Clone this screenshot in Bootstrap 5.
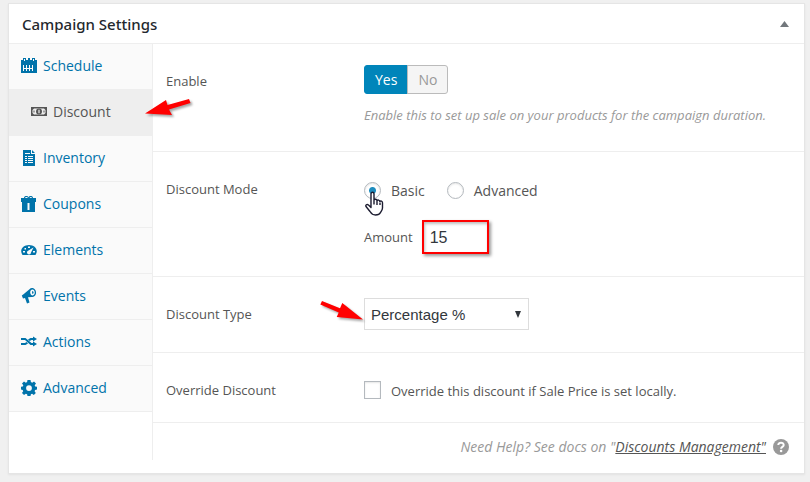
<!DOCTYPE html>
<html lang="en">
<head>
<meta charset="utf-8">
<meta name="viewport" content="width=device-width, initial-scale=1">
<title>Campaign Settings</title>
<link href="https://cdn.jsdelivr.net/npm/bootstrap@5.3.0/dist/css/bootstrap.min.css" rel="stylesheet">
<style>
body { background: #f0f0f0; color: #555; font: 13px/20px "Open Sans", "Noto Sans", sans-serif; padding: 3px 5px 8px 8px; }
.panel { background: #fff; border: 1px solid #e5e5e5; box-shadow: 0 1px 2px rgba(0,0,0,.06); padding-bottom: 13px; }
.panel-head { height: 40px; border-bottom: 1px solid #eee; padding: 0 15px 0 13px; }
.panel-head h2 { font-family: "Noto Sans", "Open Sans", sans-serif; font-size: 15px; line-height: 20px; font-weight: 500; color: #23282d; }
.toggle { border: 0; background: none; padding: 0; line-height: 0; }
.side { width: 144px; border-right: 1px solid #eee; }
.side a { height: 46px; padding: 0 0 2px 12px; gap: 6px; font-size: 14px; color: #0073aa; background: #fafafa; border-bottom: 1px solid #eee; text-decoration: none; }
.side a.current { background: #eee; color: #555; padding-left: 22px; }
.side a svg { width: 16px; height: 16px; fill: currentColor; flex: none; }
.setting { border-bottom: 1px solid #eee; padding: 21px 14px 0 13px; }
.setting-name { width: 198px; flex: none; padding-top: 6px; }
.r-enable { min-height: 108px; }
.r-mode { min-height: 125px; }
.r-type { min-height: 76px; }
.r-over { min-height: 70px; }
.yesno .btn { font: inherit; font-size: 14px; line-height: 20px; height: 29px; padding: 3px 10px; border-radius: 3px; }
.yesno .yes { background: #0085ba; border-color: #0085ba; color: #fff; }
.yesno .no { background: #f5f5f5; border-color: #bbb; color: #999; }
.hint { color: #999; font-style: italic; margin-top: 11px; }
.form-check-input.tick { width: 17px; height: 17px; margin: 0; border: 1px solid #b4b9be; box-shadow: inset 0 1px 2px rgba(0,0,0,.1); background-color: #fff; background-size: 100% 100%; }
.form-check-input.tick[type=checkbox] { border-radius: 0; height: 18px; }
.form-check-input.tick:checked { background-color: #fff; background-image: radial-gradient(circle, #1e8cbe 3px, transparent 4px); }
.choice { gap: 10px; }
.modes { padding-top: 6px; gap: 22px; }
.modes label { font-size: 14px; padding-top: 2px; }
.amount-row { margin-top: 19px; gap: 9px; }
.override-row { padding-top: 7px; }
.amount { width: 67px; height: 34px; border: 2px solid #f00; border-radius: 0; padding: 2px 6px 0; font: 16px "Liberation Sans", Arial, sans-serif; color: #32373c; box-shadow: 2px 2px 3px rgba(0,0,0,.4), inset 1px 2px 3px rgba(0,0,0,.25); }
.kind { width: 165px; height: 32px; border: 1px solid #ddd; border-radius: 0; padding: 0 24px 0 6px; font: 15px "Liberation Sans", Arial, sans-serif; color: #32373c; background-image: url("data:image/svg+xml,%3Csvg xmlns='http://www.w3.org/2000/svg' viewBox='0 0 6 7'%3E%3Cpath fill='%2332373c' d='M0 0h6L3 7z'/%3E%3C/svg%3E"); background-size: 6px 7px; background-position: right 7px center; }
.foot { height: 37px; padding: 10px 15px 0 0; gap: 7px; font-size: 14px; font-style: italic; color: #999; }
.foot a { color: #555; }
.mark-arrow, .pointer { position: absolute; pointer-events: none; }
.mark-arrow { filter: drop-shadow(2px 2px 1px rgba(0,0,0,.35)); fill: #f00; }
.at-nav { left: 136px; top: 9px; }
.at-kind { left: -44px; top: 3px; }
.pointer { left: 1px; top: 12px; }
</style>
<script src="https://cdn.jsdelivr.net/npm/bootstrap@5.3.0/dist/js/bootstrap.bundle.min.js"></script>
</head>
<body>
<main class="panel">
  <header class="panel-head d-flex align-items-center justify-content-between">
    <h2 class="m-0">Campaign Settings</h2>
    <button class="toggle" type="button" aria-label="Toggle panel"><svg width="9" height="6" viewBox="0 0 9 6"><path fill="#72777c" d="M4.500 0 9 6H0z"/></svg></button>
  </header>
  <div class="d-flex">
    <nav class="side flex-shrink-0">
      <a href="#" class="d-flex align-items-center"><svg viewBox="0 0 16 16"><path fill-rule="evenodd" d="M0 2h2V0h3v2h2V0h2v2h2V0h3v2h2v13H0zM3 1v2h1V1zm9 0v2h1V1zM2 7v6h1v-2h2v2h1v-2h2v2h1v-2h2v2h1V7h-1v3H9V7H8v3H6V7H5v3H3V7z"/></svg>Schedule</a>
      <div class="position-relative">
        <a href="#" class="current d-flex align-items-center" aria-current="page"><svg viewBox="0 0 16 16"><path fill-rule="evenodd" d="M0 3h16v9H0zM3 4.500 1.500 6v3L3 10.500h10L14.500 9V6L13 4.500z"/><path fill-rule="evenodd" d="M8 4.500a3 3 0 1 0 0 6 3 3 0 0 0 0-6zM7.400 5.700h1.200v3.600H7.400zM2.500 6.500h1v2h-1zM12.500 6.500h1v2h-1z"/></svg>Discount</a>
        <svg class="mark-arrow at-nav" width="48" height="20" viewBox="0 0 48 20"><path d="M0 14.500 21 1l1.500 5L44 0l1.500 4L24 10.500l3 5.500z"/></svg>
      </div>
      <a href="#" class="d-flex align-items-center"><svg viewBox="0 0 16 16"><path fill-rule="evenodd" d="M2 0h8v4h4v12H2zM11 0l3 3h-3zM4 3v1h5V3zm0 3v1h2V6zm3 0v1h5V6zM4 8v1h2V8zm3 0v1h5V8zm-3 2v1h2v-1zm3 0v1h5v-1zm-3 2v1h2v-1zm3 0v1h5v-1z"/></svg>Inventory</a>
      <a href="#" class="d-flex align-items-center"><svg viewBox="0 0 16 16"><path fill-rule="evenodd" d="M0 2h3C3-.5 7-.5 7.500 1.500 8-.5 12-.5 12 2h3v4h-1v10H1V6H0zM4 2h3C6.500.5 4.200.5 4 2zM8.500 2H11C10.800.5 9 .5 8.500 2zM6.500 7v7h2V7z"/></svg>Coupons</a>
      <a href="#" class="d-flex align-items-center"><svg viewBox="0 0 16 16"><path fill-rule="evenodd" d="M1.500 13C-2 8 2 3 8 3s10 5 6.500 10zM7 4.500v1.500h2V4.500zM3.500 6v1.500H5V6zM2 9v1.500h2V9zm10 0v1.500h2V9zM12.500 5.500 7.500 8.500A2 2 0 1 0 10 10.500z"/></svg>Elements</a>
      <a href="#" class="d-flex align-items-center"><svg viewBox="0 0 16 16"><path fill-rule="evenodd" d="M11 0c2.500 0 4.500 2.500 4 5.500-.5 2.500-2.500 4-4.500 3.500L7 9.300l1.500 5.200L6 15.500 4 10 2 10.500.8 7.500 2.500 6.200 8.500 1.200C9.200.4 10 0 11 0zm.5 1.500c-1.600 0-2.500 1.500-2.300 3.300.2 1.700 1.300 2.900 2.500 2.700 1.500-.2 2.300-1.800 2-3.500-.2-1.500-1-2.500-2.200-2.500zm-.5 1.800c1-.4 1.600.3 1.600 1.200s-.6 1.500-1.400 1.200z"/></svg>Events</a>
      <a href="#" class="d-flex align-items-center"><svg viewBox="0 0 16 16"><path d="M0 4h4.500l6 5H12V7.500l4 2.500-4 2.500V11H9.500L4 6H0zM0 9h4l1.500-1L7 9.500 4.500 11H0zM7 5.500 9.500 4H12V2.500L16 5l-4 2.500V6h-1.500L8.700 7z"/></svg>Actions</a>
      <a href="#" class="d-flex align-items-center"><svg viewBox="0 0 16 16"><path fill-rule="evenodd" d="M6.500 0h3l.4 2.100 1.300.6L13 1.500 15 3.400l-1.300 1.900.5 1.200L16 6.800v2.700l-1.900.4-.5 1.300 1.200 1.800-2 1.900-1.700-1.200-1.200.5L9.500 16h-3l-.4-1.800-1.300-.5L3 14.900l-2-1.900 1.200-1.800-.5-1.300L0 9.500V6.800l1.800-.3.500-1.200L1 3.400l2-1.900 1.800 1.200 1.300-.6zM8 5.200a2.900 2.900 0 1 0 0 5.800 2.900 2.900 0 0 0 0-5.800z"/></svg>Advanced</a>
    </nav>
    <form class="flex-grow-1">
      <div class="setting r-enable d-flex">
        <div class="setting-name">Enable</div>
        <div>
          <div class="btn-group yesno" role="group" aria-label="Enable"><button type="button" class="btn yes" aria-pressed="true">Yes</button><button type="button" class="btn no">No</button></div>
          <div class="hint">Enable this to set up sale on your products for the campaign duration.</div>
        </div>
      </div>
      <div class="setting r-mode d-flex">
        <div class="setting-name">Discount Mode</div>
        <div>
          <div class="modes d-flex">
            <div class="choice d-flex align-items-center position-relative"><input class="form-check-input tick" type="radio" name="mode" id="basic" checked><label for="basic">Basic</label>
              <svg class="pointer" width="20" height="26" viewBox="0 0 20 26"><path fill="#fff" stroke="#1c1c30" stroke-width="1.400" stroke-linejoin="round" d="M6 14V3c0-2.300 3-2.300 3 0v6c.6-1.200 2.700-1 3 .6.700-1 2.600-.7 2.800.8.800-.8 2.700-.3 2.700 1.400V17c0 2-1.500 3.500-2 4.500-.8 1.800-2.300 2.500-5 2.500-3 0-4-1-5.500-3.500L1 15.500c-.7-1.400.8-2.700 2.500-1.500L6 16.500zM9 9v4.500M12 10v4M15 11.500V14"/></svg>
            </div>
            <div class="choice d-flex align-items-center"><input class="form-check-input tick" type="radio" name="mode" id="advanced"><label for="advanced">Advanced</label></div>
          </div>
          <div class="amount-row d-flex align-items-center"><label for="amount">Amount</label><input class="amount" type="text" id="amount" value="15"></div>
        </div>
      </div>
      <div class="setting r-type d-flex">
        <label class="setting-name" for="kind">Discount Type</label>
        <div class="position-relative">
          <select class="form-select kind" id="kind"><option>Percentage %</option></select>
          <svg class="mark-arrow at-kind" width="46" height="21" viewBox="0 0 46 21"><path d="M43 18.500 22.300 2 20 7.300 2 0 .3 3.500 18.700 11.500 16.700 16z"/></svg>
        </div>
      </div>
      <div class="setting r-over d-flex">
        <div class="setting-name">Override Discount</div>
        <div class="choice override-row d-flex align-items-start"><input class="form-check-input tick" type="checkbox" id="override"><label for="override">Override this discount if Sale Price is set locally.</label></div>
      </div>
      <div class="foot d-flex align-items-center justify-content-end">
        <span>Need Help? See docs on "<a href="#">Discounts Management"</a></span>
        <svg width="16" height="16" viewBox="0 0 16 16" aria-hidden="true"><circle cx="8" cy="8" r="8" fill="#999"/><path d="M5.300 6C5.300 2.800 10.800 2.900 10.700 6c0 2-2.600 1.800-2.600 3.700" fill="none" stroke="#fff" stroke-width="2"/><circle cx="8.100" cy="12" r="1.300" fill="#fff"/></svg>
      </div>
    </form>
  </div>
</main>
</body>
</html>
